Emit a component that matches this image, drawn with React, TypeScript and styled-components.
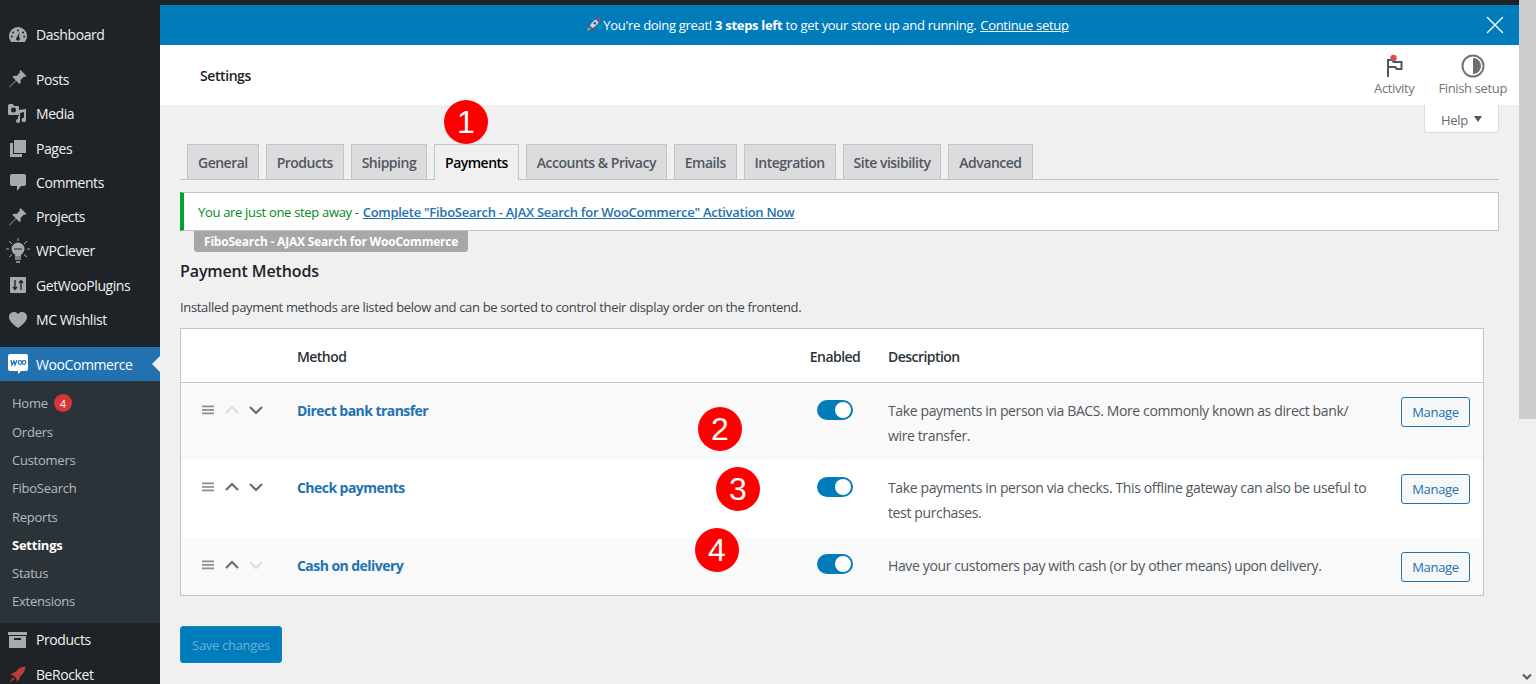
import React from 'react'
import styled, { createGlobalStyle } from 'styled-components'
import { X } from 'lucide-react'

const GlobalStyle = createGlobalStyle`
  html, body { margin: 0; padding: 0; overflow: hidden; }
  body {
    background: #f0f0f1;
    font-family: "Open Sans", "Liberation Sans", sans-serif;
    font-size: 13px;
    color: #3c434a;
  }
  * { box-sizing: border-box; }
`

const Page = styled.div`
  position: relative;
  display: grid;
  grid-template-columns: 160px 1359px 17px;
  height: 684px;
  overflow: hidden;
`

/* left admin menu */
const Sidebar = styled.nav`
  background: #1d2327;
  height: 684px;
  overflow: hidden;
  padding-top: 17px;
`

const MenuGroup = styled.div<{ $gap?: number }>`
  margin-bottom: ${p => p.$gap ?? 0}px;
`

const MenuItem = styled.div<{ $active?: boolean }>`
  position: relative;
  display: flex;
  align-items: center;
  height: ${p => (p.$active ? 34 : 34.3)}px;
  color: ${p => (p.$active ? '#fff' : '#f0f0f1')};
  background: ${p => (p.$active ? '#2271b1' : 'transparent')};
  font-size: 14px;
  letter-spacing: -0.42px;
  white-space: nowrap;
  ${p => p.$active && `
    &::after {
      content: '';
      position: absolute;
      right: 0;
      top: 9px;
      border: 8px solid transparent;
      border-right-color: #f0f0f1;
      border-left-width: 0;
    }
  `}
`

const MenuIcon = styled.span`
  display: flex;
  justify-content: center;
  align-items: center;
  width: 36px;
  flex: none;
  padding-right: 1px;
  color: #a7aaad;
`

const Submenu = styled.div`
  background: #2c3338;
  padding: 8px 0 7px;
`

const SubItem = styled.div<{ $current?: boolean }>`
  display: flex;
  align-items: center;
  gap: 6px;
  height: 28.3px;
  padding-left: 12px;
  font-size: 13px;
  letter-spacing: -0.25px;
  color: ${p => (p.$current ? '#fff' : 'rgba(240,246,252,.7)')};
  font-weight: ${p => (p.$current ? 700 : 400)};
`

const CountBadge = styled.span`
  display: inline-flex;
  align-items: center;
  justify-content: center;
  width: 18px;
  height: 18px;
  border-radius: 50%;
  background: #d63638;
  color: #fff;
  font-size: 11px;
`

/* main column */
const Main = styled.main`
  display: flex;
  flex-direction: column;
  min-width: 0;
`

const TopEdge = styled.div`
  height: 5px;
  background: #1d2327;
`

const Banner = styled.div`
  position: relative;
  display: flex;
  align-items: center;
  justify-content: center;
  gap: 3px;
  height: 40px;
  padding-right: 24px;
  background: #007cba;
  color: #fff;
  font-size: 13px;
  letter-spacing: -0.3px;

  b { font-weight: 700; }
  u { margin-left: 4px; }
`

const BannerClose = styled.span`
  position: absolute;
  right: 9px;
  top: 5px;
  display: flex;
  color: #fff;
`

const HeaderBar = styled.header`
  display: flex;
  justify-content: space-between;
  height: 60px;
  background: #fff;
  padding-left: 40px;
`

const HeaderTitle = styled.h1`
  margin: 0;
  font-size: 14px;
  line-height: 62px;
  font-weight: 600;
  letter-spacing: -0.42px;
  color: #1e1e1e;
`

const HeaderActions = styled.div`
  display: flex;
  padding-right: 12px;
  gap: 24px;
`

const HeaderAction = styled.div`
  display: flex;
  flex-direction: column;
  align-items: center;
  padding-top: 9px;
  gap: 1px;
  font-size: 13px;
  letter-spacing: -0.36px;
  color: #757575;
`

const Content = styled.div`
  padding: 0 20px;
`

const HelpRow = styled.div`
  display: flex;
  justify-content: flex-end;
`

const HelpTab = styled.div`
  display: flex;
  align-items: center;
  gap: 6px;
  width: 75px;
  height: 28px;
  padding: 2px 0 0 16px;
  background: #fff;
  border: 1px solid #dcdcde;
  border-top: 0;
  border-radius: 0 0 4px 4px;
  font-size: 13px;
  letter-spacing: -0.3px;
  color: #646970;

  &::after {
    content: '';
    border: 4.5px solid transparent;
    border-top: 6px solid #50575e;
    border-bottom: 0;
    margin-top: -2px;
  }
`

const TabBar = styled.div`
  display: flex;
  height: 47px;
  padding: 11px 0 0 7px;
  border-bottom: 1px solid #c3c4c7;
  gap: 6.9px;
`

const Tab = styled.div<{ $active?: boolean }>`
  display: flex;
  align-items: center;
  height: ${p => (p.$active ? 36 : 35)}px;
  padding: 0 10px;
  border: 1px solid #c3c4c7;
  border-bottom: 0;
  background: ${p => (p.$active ? '#f0f0f1' : '#dcdcde')};
  color: ${p => (p.$active ? '#000' : '#50575e')};
  font-size: 14px;
  font-weight: 600;
  letter-spacing: -0.5px;
  white-space: nowrap;
`

const Notice = styled.div`
  display: flex;
  align-items: center;
  height: 39px;
  margin-top: 12px;
  padding-left: 14px;
  background: #fff;
  border: 1px solid #c3c4c7;
  border-left: 4px solid #00a32a;
  color: #008a20;
  font-size: 13px;
  letter-spacing: -0.32px;

  a {
    margin-left: 4px;
    color: #2271b1;
    font-weight: 600;
    letter-spacing: -0.28px;
    text-decoration: underline;
  }
`

const PluginBadge = styled.div`
  display: inline-block;
  height: 21px;
  margin-left: 14px;
  padding: 0 10px;
  background: #a7a7a7;
  border-radius: 0 0 3px 3px;
  color: #fff;
  font-size: 12px;
  line-height: 21px;
  font-weight: 700;
  letter-spacing: -0.21px;
`

const SectionTitle = styled.h2`
  margin: 7px 0 0;
  font-size: 16px;
  line-height: 24px;
  font-weight: 600;
  letter-spacing: -0.12px;
  color: #1d2327;
`

const SectionText = styled.p`
  margin: 16px 0 0;
  font-size: 13px;
  line-height: 16px;
  letter-spacing: -0.33px;
  color: #3c434a;
`

const MethodsTable = styled.div`
  width: 1304px;
  margin-top: 13px;
  background: #fff;
  border: 1px solid #c3c4c7;
`

const gridCols = '116px 485px 106px 1fr 82px'

const HeadRow = styled.div`
  display: grid;
  grid-template-columns: ${gridCols};
  align-items: center;
  height: 54px;
  padding-top: 2px;
  border-bottom: 1px solid #c3c4c7;
  font-size: 14px;
  font-weight: 600;
  letter-spacing: -0.55px;
  color: #2c3338;
`

const MethodRow = styled.div<{ $alt?: boolean; $short?: boolean }>`
  display: grid;
  grid-template-columns: ${gridCols};
  height: ${p => (p.$short ? 57.2 : 77.4)}px;
  padding-top: 14px;
  background: ${p => (p.$alt ? '#f9f9f9' : '#fff')};
`

const SortCell = styled.div`
  display: flex;
  align-items: flex-start;
  gap: 10.5px;
  padding: 5px 0 0 21px;
`

const MethodName = styled.a`
  padding-top: 1px;
  color: #2271b1;
  font-size: 14px;
  line-height: 25px;
  font-weight: 700;
  letter-spacing: -0.55px;
`

const EnabledCell = styled.div<{ $head?: boolean }>`
  display: flex;
  justify-content: center;
  padding-top: ${p => (p.$head ? 0 : 2.5)}px;
`

const ToggleTrack = styled.span`
  display: flex;
  justify-content: flex-end;
  align-items: center;
  width: 36px;
  height: 20px;
  padding-right: 2px;
  border-radius: 10px;
  background: #007cba;
`

const ToggleKnob = styled.span`
  width: 16px;
  height: 16px;
  border-radius: 50%;
  background: #fff;
`

const Description = styled.div`
  padding: 1px 26px 0 0;
  font-size: 14px;
  line-height: 25px;
  letter-spacing: -0.37px;
  color: #50575e;
`

const ManageButton = styled.button`
  width: 69px;
  height: 30px;
  padding: 0;
  background: #f6f7f7;
  border: 1px solid #2271b1;
  border-radius: 3px;
  color: #2271b1;
  font-family: inherit;
  font-size: 13px;
  letter-spacing: -0.3px;
`

const SaveButton = styled.button`
  display: block;
  width: 102px;
  height: 37px;
  margin-top: 30px;
  padding: 1px 0 0;
  background: #007cba;
  border: 1px solid #0a88c8;
  border-radius: 3px;
  color: #66b0d6;
  font-family: inherit;
  font-size: 13px;
  letter-spacing: -0.3px;
`

/* browser scrollbar */
const ScrollTrack = styled.div`
  position: relative;
  background: #f0f0f0;
`

const ScrollThumb = styled.div`
  height: 419px;
  background: #cdcdcd;
`

const ScrollArrow = styled.svg`
  position: absolute;
  left: 3px;
  bottom: 3px;
`

/* annotations on top of the screenshot */
const Marker = styled.span<{ $x: number; $y: number }>`
  position: absolute;
  left: ${p => p.$x - 22}px;
  top: ${p => p.$y - 22}px;
  display: flex;
  align-items: center;
  justify-content: center;
  width: 44px;
  height: 44px;
  border-radius: 50%;
  background: #ff0000;
  color: #fff;
  font-family: "Liberation Sans", Arial, sans-serif;
  font-size: 32px;
  line-height: 1;
`

const Handle = () => (
  <svg width="12" height="16" viewBox="0 0 12 16" fill="#8c8f94">
    <rect x="0" y="3.5" width="12" height="1.8" />
    <rect x="0" y="7" width="12" height="1.8" />
    <rect x="0" y="10.5" width="12" height="1.8" />
  </svg>
)

const Chevron = ({ up, off }: { up?: boolean; off?: boolean }) => (
  <svg width="14" height="16" viewBox="0 0 14 16" fill="none" stroke={off ? '#dcdcde' : '#646970'} strokeWidth="2">
    <path d={up ? 'M1 11l6-6 6 6' : 'M1 5l6 6 6-6'} />
  </svg>
)

const Gauge = () => (
  <svg width="18" height="15" viewBox="0 0 18 15" fill="currentColor">
    <path d="M9 0a9 9 0 0 0-9 9c0 2.3.8 4.2 2.2 6h13.6A9 9 0 0 0 18 9a9 9 0 0 0-9-9zM9 2.5a1 1 0 1 1 0 2 1 1 0 0 1 0-2zM4 4.5a1 1 0 1 1 0 2 1 1 0 0 1 0-2zM14 4.5a1 1 0 1 1 0 2 1 1 0 0 1 0-2zM2.8 8.5a1 1 0 1 1 0 2 1 1 0 0 1 0-2zM15.2 8.5a1 1 0 1 1 0 2 1 1 0 0 1 0-2zM10.5 5l-.5 5.2a1.8 1.8 0 1 1-2 0z" fillRule="evenodd" />
  </svg>
)

const Pin = () => (
  <svg width="18" height="18" viewBox="0 0 18 18" fill="currentColor">
    <path d="M11.5 0l6 6-1.5 1-1-.5-3.500 3.500c.5 1.800.2 3-.8 4.200L7.200 10.700 1 17l-1 .5.5-1 6.300-6.200L3.300 6.800c1.200-1 2.400-1.300 4.200-.8L11 2.500l-.5-1z" />
  </svg>
)

const MediaIcon = () => (
  <svg width="19" height="19" viewBox="0 0 19 19" fill="currentColor">
    <path d="M2 0h3l1 2h4a1 1 0 0 1 1 1v7a1 1 0 0 1-1 1H1a1 1 0 0 1-1-1V2a2 2 0 0 1 2-2zm3.500 3.500a2.500 2.500 0 1 0 0 5 2.500 2.500 0 0 0 0-5z" fillRule="evenodd" />
    <path d="M18 5v11a2.200 2.200 0 1 1-2-2.200V8l-4 1v8a2 2 0 1 1-2-2v-3h1V6z" />
  </svg>
)

const PagesIcon = () => (
  <svg width="16" height="17" viewBox="0 0 16 17" fill="currentColor">
    <path d="M4 0h12v13H4z" />
    <path d="M0 3h3v11h9v3H0z" />
  </svg>
)

const CommentIcon = () => (
  <svg width="16" height="17" viewBox="0 0 16 17" fill="currentColor">
    <path d="M2 0h12a2 2 0 0 1 2 2v8a2 2 0 0 1-2 2h-3l-4 5v-5H2a2 2 0 0 1-2-2V2a2 2 0 0 1 2-2z" />
  </svg>
)

const BulbIcon = () => (
  <svg width="24" height="26" viewBox="0 0 24 26" fill="none" stroke="#a7aaad">
    <path d="M12 0v3M3 3l3 3M21 3l-3 3M0 11h3M21 11h3M3 19l3-2.500M21 19l-3-2.500" />
    <circle cx="12" cy="11" r="6.500" fill="#a7aaad" stroke="none" />
    <path d="M9 17h6v5H9z" fill="#a7aaad" stroke="none" />
    <path d="M10 24h4" strokeWidth="1.500" />
    <path d="M8 11h8" stroke="#1d2327" />
    <path d="M9 19h6M9 21h6" stroke="#1d2327" strokeWidth=".6" />
  </svg>
)

const SlidersIcon = () => (
  <svg width="16" height="16" viewBox="0 0 16 16">
    <rect width="16" height="16" rx="1" fill="#a7aaad" />
    <path d="M5 3v9M3 10l2 2.500L7 10M11 13V4M9 6l2-2.500L13 6" fill="none" stroke="#1d2327" strokeWidth="1.300" />
  </svg>
)

const HeartIcon = () => (
  <svg width="18" height="16" viewBox="0 0 18 16" fill="currentColor">
    <path d="M9 16C3 11.500 0 8.500 0 5a5 5 0 0 1 9-3 5 5 0 0 1 9 3c0 3.500-3 6.500-9 11z" />
  </svg>
)

const WooIcon = () => (
  <svg width="20" height="20" viewBox="0 0 20 20">
    <path d="M2 0h16a2 2 0 0 1 2 2v13a2 2 0 0 1-2 2h-5l-3 3v-3H2a2 2 0 0 1-2-2V2a2 2 0 0 1 2-2z" fill="#fff" />
    <path d="M3 6l1 5 2-4 1 4 2-5" fill="none" stroke="#2271b1" strokeWidth="1.300" />
    <circle cx="12" cy="8.500" r="1.800" fill="none" stroke="#2271b1" strokeWidth="1.200" />
    <circle cx="16" cy="8.500" r="1.800" fill="none" stroke="#2271b1" strokeWidth="1.200" />
  </svg>
)

const ArchiveIcon = () => (
  <svg width="20" height="16" viewBox="0 0 20 16" fill="currentColor">
    <path d="M0 0h19v3H0z" />
    <path d="M1 4h17v12H1zM6 6v2h7V6z" fillRule="evenodd" />
  </svg>
)

const SideRocket = () => (
  <svg width="17" height="17" viewBox="0 0 16 16">
    <path d="M15.500.5c-4 .3-7 2-9.300 5.200L4 6 1.500 8.500l2.700.5 2.800 2.800.5 2.700L10 12l.3-2.200C13.500 7.500 15.200 4.500 15.500.5z" fill="#c23b3b" />
    <path d="M3.500 10.500L.5 15.500l5-3z" fill="#a33" />
  </svg>
)

const EmojiRocket = () => (
  <svg width="14" height="14" viewBox="0 0 16 16">
    <path d="M3.500 10.500L1 15l4.500-2.500z" fill="#f5a623" />
    <path d="M5 6.500L1.500 8 4 9.500zM9.500 11L8 14.500 6.500 12z" fill="#c8232c" />
    <path d="M15.500.5C11.500.8 8 3 4.500 8.500l3 3C13 8 15.200 4.500 15.500.5z" fill="#c8d6e5" />
    <path d="M15.500.5c-1.500.1-3 .5-4.300 1.200l3.100 3.100c.7-1.300 1.100-2.800 1.200-4.300z" fill="#c8232c" />
    <circle cx="10" cy="6" r="1.500" fill="#2d5f8b" />
  </svg>
)

const FlagIcon = () => (
  <svg width="20" height="24" viewBox="0 0 20 24">
    <path d="M4 23V6h4.500l1 2h8v7h-5l-1-2H4" fill="none" stroke="#50575e" strokeWidth="2" />
    <circle cx="9.500" cy="4" r="3.200" fill="#d94f4f" />
  </svg>
)

const HalfCircleIcon = () => (
  <svg width="24" height="24" viewBox="0 0 24 24">
    <circle cx="12" cy="12" r="10.500" fill="#fff" stroke="#757575" strokeWidth="2" />
    <path d="M12 4a8 8 0 0 1 0 16z" fill="#6c7074" />
  </svg>
)

const menuTop = [
  { label: 'Posts', icon: <Pin /> },
  { label: 'Media', icon: <MediaIcon /> },
  { label: 'Pages', icon: <PagesIcon /> },
  { label: 'Comments', icon: <CommentIcon /> },
  { label: 'Projects', icon: <Pin /> },
  { label: 'WPClever', icon: <BulbIcon /> },
  { label: 'GetWooPlugins', icon: <SlidersIcon /> },
  { label: 'MC Wishlist', icon: <HeartIcon /> },
]

const tabs = ['General', 'Products', 'Shipping', 'Payments', 'Accounts & Privacy', 'Emails', 'Integration', 'Site visibility', 'Advanced']

const methods = [
  {
    name: 'Direct bank transfer',
    text: 'Take payments in person via BACS. More commonly known as direct bank/ wire transfer.',
    upOff: true,
  },
  {
    name: 'Check payments',
    text: 'Take payments in person via checks. This offline gateway can also be useful to test purchases.',
  },
  {
    name: 'Cash on delivery',
    text: 'Have your customers pay with cash (or by other means) upon delivery.',
    downOff: true,
  },
]

const App = () => (
  <Page>
    <GlobalStyle />
    <Sidebar>
      <MenuGroup $gap={11}>
        <MenuItem><MenuIcon><Gauge /></MenuIcon>Dashboard</MenuItem>
      </MenuGroup>
      <MenuGroup $gap={10.6}>
        {menuTop.map(item => (
          <MenuItem key={item.label}><MenuIcon>{item.icon}</MenuIcon>{item.label}</MenuItem>
        ))}
      </MenuGroup>
      <MenuItem $active><MenuIcon><WooIcon /></MenuIcon>WooCommerce</MenuItem>
      <Submenu>
        <SubItem>Home <CountBadge>4</CountBadge></SubItem>
        <SubItem>Orders</SubItem>
        <SubItem>Customers</SubItem>
        <SubItem>FiboSearch</SubItem>
        <SubItem>Reports</SubItem>
        <SubItem $current>Settings</SubItem>
        <SubItem>Status</SubItem>
        <SubItem>Extensions</SubItem>
      </Submenu>
      <MenuItem><MenuIcon><ArchiveIcon /></MenuIcon>Products</MenuItem>
      <MenuItem><MenuIcon><SideRocket /></MenuIcon>BeRocket</MenuItem>
    </Sidebar>

    <Main>
      <TopEdge />
      <Banner>
        <EmojiRocket />
        <span>You're doing great! <b>3 steps left</b> to get your store up and running.<u>Continue setup</u></span>
        <BannerClose><X size={30} strokeWidth={1.1} /></BannerClose>
      </Banner>
      <HeaderBar>
        <HeaderTitle>Settings</HeaderTitle>
        <HeaderActions>
          <HeaderAction><FlagIcon />Activity</HeaderAction>
          <HeaderAction><HalfCircleIcon />Finish setup</HeaderAction>
        </HeaderActions>
      </HeaderBar>
      <Content>
        <HelpRow><HelpTab>Help</HelpTab></HelpRow>
        <TabBar>
          {tabs.map(t => <Tab key={t} $active={t === 'Payments'}>{t}</Tab>)}
        </TabBar>
        <Notice>
          You are just one step away -
          <a>Complete "FiboSearch - AJAX Search for WooCommerce" Activation Now</a>
        </Notice>
        <PluginBadge>FiboSearch - AJAX Search for WooCommerce</PluginBadge>
        <SectionTitle>Payment Methods</SectionTitle>
        <SectionText>Installed payment methods are listed below and can be sorted to control their display order on the frontend.</SectionText>
        <MethodsTable>
          <HeadRow>
            <span />
            <span>Method</span>
            <EnabledCell $head>Enabled</EnabledCell>
            <span>Description</span>
            <span />
          </HeadRow>
          {methods.map((m, i) => (
            <MethodRow key={m.name} $alt={i !== 1} $short={i === 2}>
              <SortCell>
                <Handle />
                <Chevron up off={m.upOff} />
                <Chevron off={m.downOff} />
              </SortCell>
              <MethodName>{m.name}</MethodName>
              <EnabledCell><ToggleTrack><ToggleKnob /></ToggleTrack></EnabledCell>
              <Description>{m.text}</Description>
              <div><ManageButton>Manage</ManageButton></div>
            </MethodRow>
          ))}
        </MethodsTable>
        <SaveButton>Save changes</SaveButton>
      </Content>
    </Main>

    <ScrollTrack>
      <ScrollThumb />
      <ScrollArrow width="10" height="8" viewBox="0 0 10 8" fill="none" stroke="#50575e" strokeWidth="2">
        <path d="M1 1.5l4 4 4-4" />
      </ScrollArrow>
    </ScrollTrack>

    <Marker $x={466} $y={122}>1</Marker>
    <Marker $x={720} $y={429}>2</Marker>
    <Marker $x={738} $y={489}>3</Marker>
    <Marker $x={717} $y={550}>4</Marker>
  </Page>
)

export default App
